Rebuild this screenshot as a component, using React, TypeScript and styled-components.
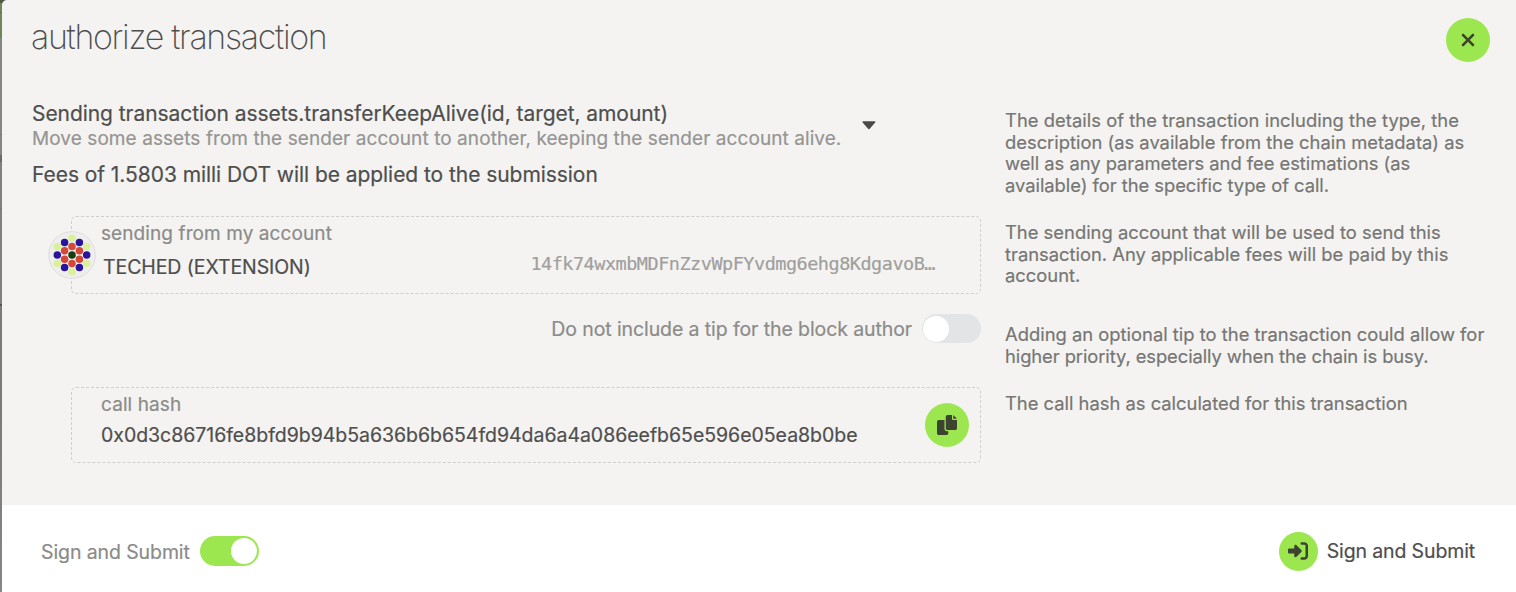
import React from 'react';
import styled, { createGlobalStyle } from 'styled-components';
import { FaRightToBracket, FaXmark } from 'react-icons/fa6';

const GlobalStyle = createGlobalStyle`
  * { box-sizing: border-box; }
  body { margin: 0; background: #7f7f7f; }
`;

const Backdrop = styled.div`
  display: flex;
  height: 592px;
  padding-left: 2px;
  overflow: hidden;
  background: linear-gradient(
    #4f5a46 0 3px, #6d875a 3px 12px, #5b6f4c 12px 13px, #6d875a 13px 38px,
    #858585 38px 134px, #777 134px 135px, #858585 135px 155px, #6b6b6b 155px 162px,
    #808080 162px 208px, #757575 208px 209px, #808080 209px 304px, #555 304px 306px,
    #7a7a7a 306px 400px, #868686
  );
  color: #4e4e4e;
  font: 400 20px/22px Inter, 'Liberation Sans', sans-serif;
  -webkit-text-stroke: 0.2px currentColor;
  white-space: nowrap;
`;

const Modal = styled.main`
  display: flex;
  flex-direction: column;
  flex: 1;
  background: #f4f3f1;
  border-top-left-radius: 5px;
  overflow: hidden;
`;

const Header = styled.header`
  display: flex;
  justify-content: space-between;
  height: 102px;
  padding: 18px 26px 0 29px;
`;

const Title = styled.h1`
  margin: 0;
  font-size: 34px;
  font-weight: 200;
  line-height: 37px;
  letter-spacing: -1.32px;
  -webkit-text-stroke-width: 0;
`;

const RoundButton = styled.button<{ $size: number }>`
  display: flex;
  align-items: center;
  justify-content: center;
  flex: none;
  width: ${(p) => p.$size}px;
  height: ${(p) => p.$size}px;
  padding: 0;
  border: 0;
  border-radius: 50%;
  background: #9ce750;
  color: #3c4430;
`;

const Row = styled.section<{ $height: number }>`
  display: grid;
  grid-template-columns: 949px 1fr;
  column-gap: 24px;
  height: ${(p) => p.$height}px;
  padding-left: 30px;
`;

const Hint = styled.p<{ $top: number }>`
  margin: 0;
  padding-top: ${(p) => p.$top}px;
  color: #767674;
  font-size: 18.38px;
  line-height: 21.7px;
`;

const Line = styled.span<{ $spacing?: number }>`
  display: block;
  width: fit-content;
  letter-spacing: ${(p) => p.$spacing ?? 0}px;
`;

const CallSummary = styled.div`
  display: flex;
  align-items: flex-start;
  gap: 21px;
`;

const Caret = styled.svg`
  flex: none;
  margin-top: 19px;
`;

const CallName = styled(Line)`
  font-size: 21px;
  line-height: 24px;
`;

const CallDocs = styled(Line)`
  color: #959593;
  font-size: 19px;
  line-height: 26px;
`;

const Fees = styled(Line)`
  margin-top: 11px;
  font-size: 21px;
  line-height: 24px;
`;

const Field = styled.div<{ $height: number }>`
  display: flex;
  position: relative;
  height: ${(p) => p.$height}px;
  margin-left: 39px;
  padding: 6px 11px 0 29px;
  border: 1px dashed #cfcecc;
  border-radius: 5px;
`;

const FieldBody = styled.div`
  flex: 1;
`;

const Label = styled(Line)`
  color: #8b8b89;
  font-size: 19px;
`;

const Value = styled(Line)`
  margin-top: 8px;
  font-size: 19.5px;
`;

const AccountRow = styled.div`
  display: flex;
  justify-content: space-between;
  margin-top: 11px;
  padding: 0 34px 0 2px;
  font-size: 19.5px;
`;

const Address = styled(Line)`
  margin-top: -3px;
  color: #a09f9d;
  font-family: 'DejaVu Sans Mono', monospace;
  font-size: 18.5px;
`;

const IdentityBadge = styled.div`
  position: absolute;
  left: -24px;
  top: 14px;
  width: 48px;
  height: 48px;
`;

const TipRow = styled.div`
  display: flex;
  justify-content: flex-end;
  align-items: flex-start;
  gap: 10px;
  color: #8b8b89;
  font-size: 19.5px;
`;

const TipText = styled(Line)`
  margin-top: 4px;
`;

const Switch = styled.span<{ $on?: boolean }>`
  display: flex;
  justify-content: ${(p) => (p.$on ? 'flex-end' : 'flex-start')};
  align-items: center;
  width: 59px;
  height: ${(p) => (p.$on ? 30 : 29)}px;
  padding: 0 ${(p) => (p.$on ? 2 : 1)}px;
  border-radius: 15px;
  background: ${(p) => (p.$on ? '#9ce750' : '#e2e4e6')};

  &::after {
    content: '';
    width: 26px;
    height: 26px;
    border-radius: 50%;
    background: #fff;
  }
`;

const CopyButton = styled(RoundButton)`
  margin-top: 9px;
`;

const Footer = styled.footer`
  display: flex;
  justify-content: space-between;
  align-items: center;
  height: 87px;
  margin-top: auto;
  padding: 5px 41px 0 39px;
  background: #fff;
`;

const Action = styled.div<{ $muted?: boolean }>`
  display: flex;
  align-items: center;
  gap: ${(p) => (p.$muted ? 10 : 9)}px;
  color: ${(p) => (p.$muted ? '#8b8b89' : '#4e4e4e')};
  font-size: 19.5px;
`;

const ModeLabel = styled(Line)`
  padding-top: 2px;
`;

const DOTS: [number, number, string][] = [
  [0, -16.8, '#dcf09a'], [-7.4, -12.6, '#2b149c'], [7.4, -12.6, '#2b149c'],
  [-14.7, -8.4, '#dcf09a'], [14.7, -8.4, '#dcf09a'], [0, -8.4, '#d34836'],
  [-7.4, -4.2, '#d34836'], [7.4, -4.2, '#d34836'], [-14.7, 0, '#2b149c'],
  [0, 0, '#163e12'], [14.7, 0, '#2b149c'], [-7.4, 4.2, '#d34836'],
  [7.4, 4.2, '#d34836'], [0, 8.4, '#d34836'], [-14.7, 8.4, '#dcf09a'],
  [14.7, 8.4, '#dcf09a'], [-7.4, 12.6, '#2b149c'], [7.4, 12.6, '#2b149c'],
  [0, 16.8, '#dcf09a'],
];

const Identicon = () => (
  <svg width="48" height="48" viewBox="-24 -24 48 48">
    <circle r="23.3" fill="#eeeeee" stroke="#dddddc" strokeWidth="1" />
    {DOTS.map(([x, y, fill]) => (
      <circle key={`${x},${y}`} cx={x} cy={y} r="3.75" fill={fill} />
    ))}
  </svg>
);

const CopyIcon = () => (
  <svg width="20" height="20" viewBox="0 0 512 512" fill="currentColor">
    <path d="M384 96L384 0h-112c-26.51 0-48 21.49-48 48v288c0 26.51 21.49 48 48 48H464c26.51 0 48-21.49 48-48V128h-95.1C398.4 128 384 113.6 384 96zM416 0v96h96L416 0zM192 352V128h-144c-26.51 0-48 21.49-48 48v288c0 26.51 21.49 48 48 48h192c26.51 0 48-21.49 48-48L288 416h-32C220.7 416 192 387.3 192 352z" />
  </svg>
);

export default function App() {
  return (
    <Backdrop>
      <GlobalStyle />
      <Modal>
        <Header>
          <Title>authorize transaction</Title>
          <RoundButton $size={44} aria-label="close">
            <FaXmark size={20} />
          </RoundButton>
        </Header>
        <Row $height={114}>
          <div>
            <CallSummary>
              <div>
                <CallName $spacing={-0.06}>Sending transaction assets.transferKeepAlive(id, target, amount)</CallName>
                <CallDocs $spacing={0.075}>Move some assets from the sender account to another, keeping the sender account alive.</CallDocs>
              </div>
              <Caret width="14" height="9" viewBox="0 0 14 9">
                <path d="M1.2 1H12.6L6.9 7.4Z" fill="#4a4a4a" stroke="#4a4a4a" strokeWidth="1.6" strokeLinejoin="round" />
              </Caret>
            </CallSummary>
            <Fees $spacing={-0.055}>Fees of 1.5803 milli DOT will be applied to the submission</Fees>
          </div>
          <Hint $top={8}>
            <Line $spacing={0.04}>The details of the transaction including the type, the</Line>
            <Line>description (as available from the chain metadata) as</Line>
            <Line $spacing={-0.03}>well as any parameters and fee estimations (as</Line>
            <Line $spacing={-0.03}>available) for the specific type of call.</Line>
          </Hint>
        </Row>
        <Row $height={98}>
          <Field $height={78}>
            <IdentityBadge><Identicon /></IdentityBadge>
            <FieldBody>
              <Label $spacing={0.09}>sending from my account</Label>
              <AccountRow>
                <Line $spacing={-0.08}>TECHED (EXTENSION)</Line>
                <Address $spacing={-0.49}>14fk74wxmbMDFnZzvWpFYvdmg6ehg8KdgavoB…</Address>
              </AccountRow>
            </FieldBody>
          </Field>
          <Hint $top={6}>
            <Line $spacing={0.01}>The sending account that will be used to send this</Line>
            <Line>transaction. Any applicable fees will be paid by this</Line>
            <Line>account.</Line>
          </Hint>
        </Row>
        <Row $height={73}>
          <TipRow>
            <TipText $spacing={-0.1}>Do not include a tip for the block author</TipText>
            <Switch />
          </TipRow>
          <Hint $top={10}>
            <Line $spacing={0.01}>Adding an optional tip to the transaction could allow for</Line>
            <Line $spacing={-0.08}>higher priority, especially when the chain is busy.</Line>
          </Hint>
        </Row>
        <Row $height={76}>
          <Field $height={76}>
            <FieldBody>
              <Label $spacing={0.09}>call hash</Label>
              <Value $spacing={-0.03}>0x0d3c86716fe8bfd9b94b5a636b6b654fd94da6a4a086eefb65e596e05ea8b0be</Value>
            </FieldBody>
            <CopyButton $size={44} aria-label="copy">
              <CopyIcon />
            </CopyButton>
          </Field>
          <Hint $top={6}>
            <Line>The call hash as calculated for this transaction</Line>
          </Hint>
        </Row>
        <Footer>
          <Action $muted>
            <ModeLabel $spacing={-0.1}>Sign and Submit</ModeLabel>
            <Switch $on />
          </Action>
          <Action>
            <RoundButton $size={39} aria-label="sign">
              <FaRightToBracket size={20} />
            </RoundButton>
            <Line $spacing={-0.13}>Sign and Submit</Line>
          </Action>
        </Footer>
      </Modal>
    </Backdrop>
  );
}
